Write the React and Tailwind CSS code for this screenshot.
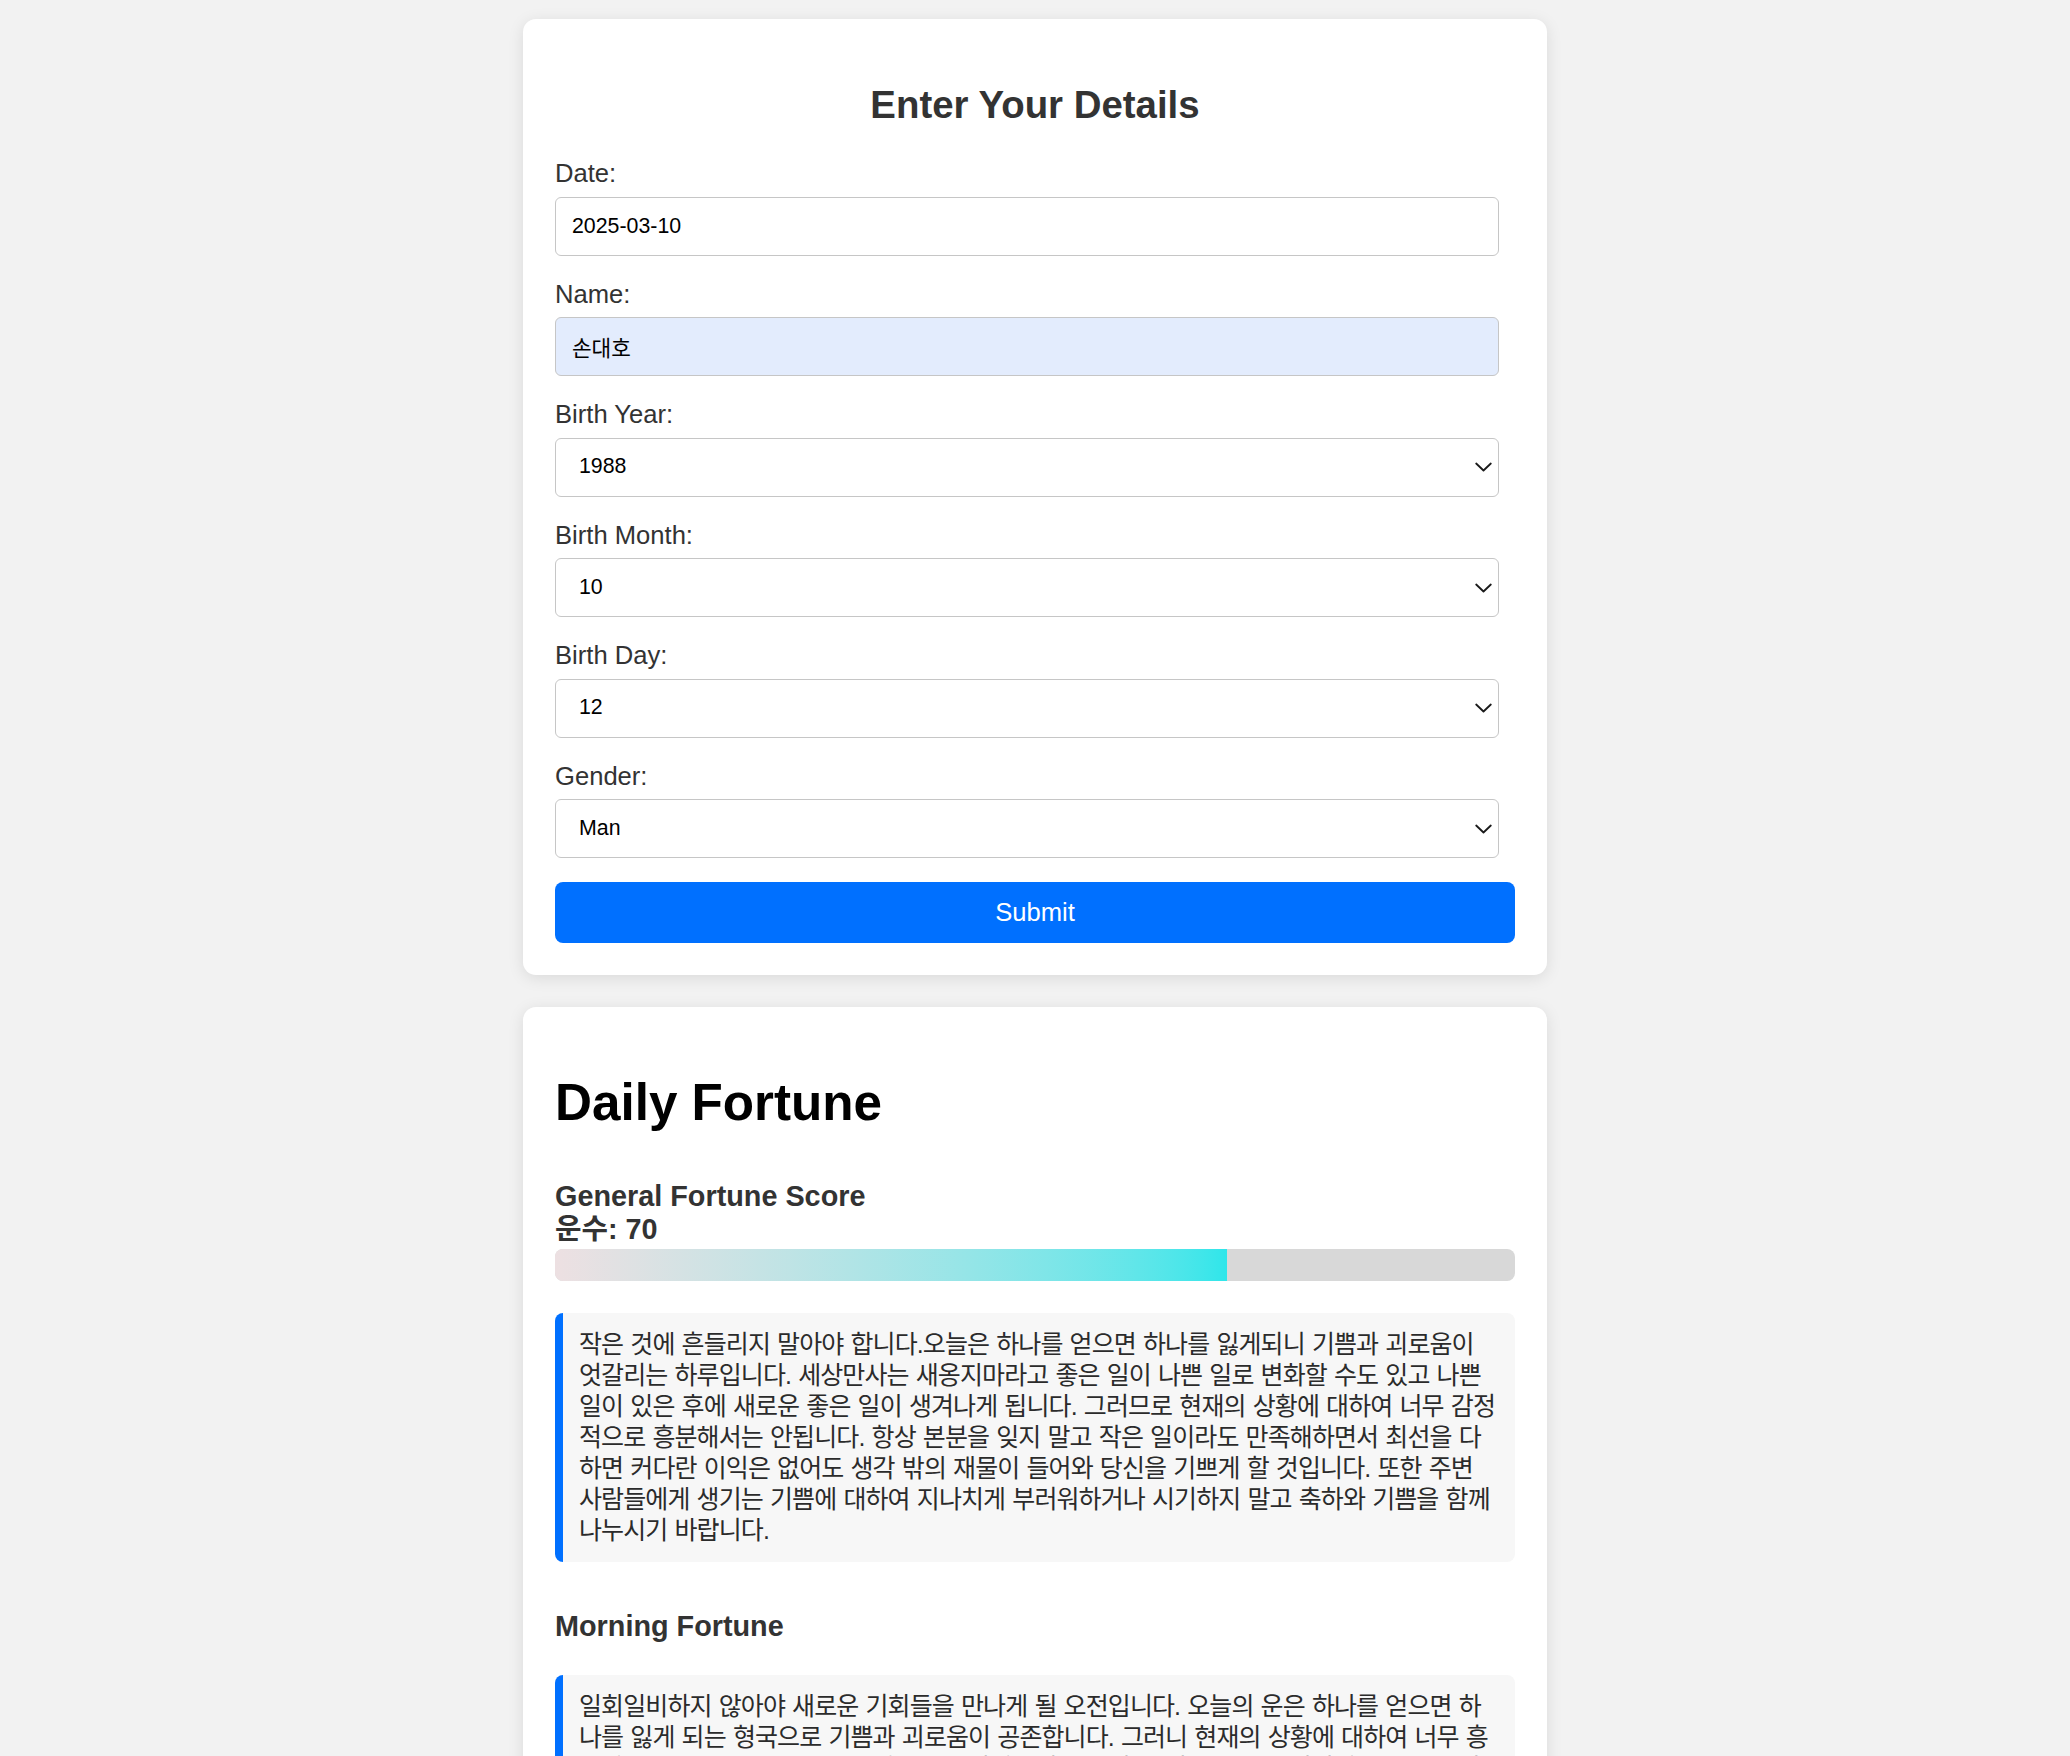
import React, { useState } from "react";

const fields = [
    { key: "date", label: "Date:", type: "text" },
    { key: "name", label: "Name:", type: "text", autofill: true },
    { key: "year", label: "Birth Year:", type: "select", options: ["1986", "1987", "1988", "1989", "1990"] },
    { key: "month", label: "Birth Month:", type: "select", options: Array.from({ length: 12 }, (_, i) => String(i + 1)) },
    { key: "day", label: "Birth Day:", type: "select", options: Array.from({ length: 31 }, (_, i) => String(i + 1)) },
    { key: "gender", label: "Gender:", type: "select", options: ["Man", "Woman"] },
];

const general = "작은 것에 흔들리지 말아야 합니다.오늘은 하나를 얻으면 하나를 잃게되니 기쁨과 괴로움이 엇갈리는 하루입니다. 세상만사는 새옹지마라고 좋은 일이 나쁜 일로 변화할 수도 있고 나쁜 일이 있은 후에 새로운 좋은 일이 생겨나게 됩니다. 그러므로 현재의 상황에 대하여 너무 감정적으로 흥분해서는 안됩니다. 항상 본분을 잊지 말고 작은 일이라도 만족해하면서 최선을 다하면 커다란 이익은 없어도 생각 밖의 재물이 들어와 당신을 기쁘게 할 것입니다. 또한 주변 사람들에게 생기는 기쁨에 대하여 지나치게 부러워하거나 시기하지 말고 축하와 기쁨을 함께 나누시기 바랍니다.";

const morning = "일회일비하지 않아야 새로운 기회들을 만나게 될 오전입니다. 오늘의 운은 하나를 얻으면 하나를 잃게 되는 형국으로 기쁨과 괴로움이 공존합니다. 그러니 현재의 상황에 대하여 너무 흥분하지 말고 차분한 마음으로 하루를 시작하시기 바랍니다. 작은 일에도 감사하는 마음을 가지면 오후에는 좋은 소식이 찾아올 것입니다.";

const inputCls = "block w-[944px] h-[59px] border border-[#c6c6c6] rounded-[6px] text-[21.33px] text-black outline-none";

function Chevron() {
    return (
        <svg className="absolute right-[7px] top-1/2 -translate-y-1/2 pointer-events-none" width="17" height="10" viewBox="0 0 17 10" fill="none">
            <polyline points="1.2,1.5 8.5,8.5 15.8,1.5" stroke="#1a1a1a" strokeWidth="1.8" strokeLinecap="round" strokeLinejoin="round" />
        </svg>
    );
}

function Quote({ children }) {
    return (
        <div className="mt-[32px] bg-[#f7f7f7] border-l-[8px] border-[#0070ff] rounded-[8px] p-[16px] text-[25px] leading-[31px] tracking-[-0.9px] [word-spacing:1.05px] text-[#2b2b2b]">
            {children}
        </div>
    );
}

export default function App() {
    const [form, setForm] = useState({ date: "2025-03-10", name: "손대호", year: "1988", month: "10", day: "12", gender: "Man" });
    const score = 70;

    const update = (key) => (e) => setForm({ ...form, [key]: e.target.value });

    return (
        <div className="min-h-screen bg-[#f2f2f2] pt-[19px] pb-[40px] [font-family:'Liberation_Sans','Noto_Sans_CJK_KR',sans-serif]">
            <div className="mx-auto w-[1024px] flex flex-col gap-[32px]">
                <form className="bg-white rounded-[13px] shadow-[0_3px_16px_rgba(0,0,0,0.1)] p-[32px]" onSubmit={(e) => e.preventDefault()}>
                    <h2 className="my-[32px] text-center text-[38.4px] leading-[44px] font-bold text-[#333]">Enter Your Details</h2>

                    {fields.map((f) => (
                        <div key={f.key}>
                            <label className="block mb-[8px] text-[25.6px] leading-[29.5px] text-[#333]">{f.label}</label>
                            {f.type === "text" ? (
                                <input
                                    type="text"
                                    value={form[f.key]}
                                    onChange={update(f.key)}
                                    className={`${inputCls} mb-[24px] px-[16px] ${f.autofill ? "bg-[#e3ecfd]" : "bg-white"}`}
                                />
                            ) : (
                                <div className="relative w-[944px] mb-[24px]">
                                    <select value={form[f.key]} onChange={update(f.key)} className={`${inputCls} appearance-none bg-white pl-[23px] pr-[40px]`}>
                                        {f.options.map((o) => <option key={o} value={o}>{o}</option>)}
                                    </select>
                                    <Chevron />
                                </div>
                            )}
                        </div>
                    ))}

                    <button type="submit" className="block w-full h-[61px] rounded-[8px] bg-[#0070ff] text-white text-[25.6px]">Submit</button>
                </form>

                <section className="bg-white rounded-[13px] shadow-[0_3px_16px_rgba(0,0,0,0.1)] p-[32px]">
                    <h1 className="mt-[34px] text-[51.2px] leading-[59px] font-bold text-black">Daily Fortune</h1>

                    <div className="mt-[48px]">
                        <h3 className="text-[28.8px] leading-[33px] font-bold text-[#333]">
                            General Fortune Score
                            <br />
                            운수: {score}
                        </h3>
                        <div className="mt-[3px] h-[32px] rounded-[8px] bg-[#d8d8d8] overflow-hidden">
                            <div className="h-full bg-linear-to-r from-[#ede0e2] to-[#2ee6ea]" style={{ width: `${score}%` }} />
                        </div>
                        <Quote>{general}</Quote>
                    </div>

                    <div className="mt-[48px]">
                        <h3 className="text-[28.8px] leading-[33px] font-bold text-[#333]">Morning Fortune</h3>
                        <Quote>{morning}</Quote>
                    </div>
                </section>
            </div>
        </div>
    );
}
